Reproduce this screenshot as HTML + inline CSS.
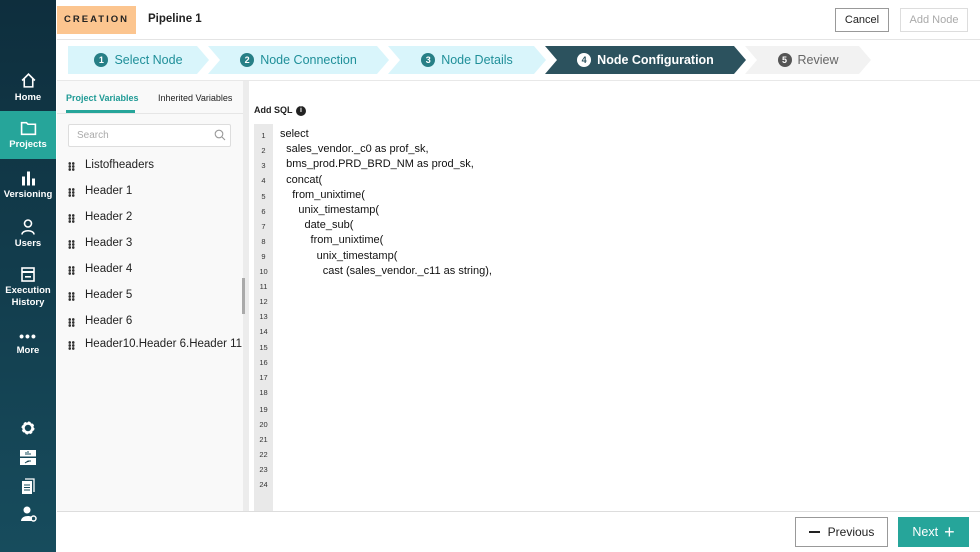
<!DOCTYPE html>
<html><head><style>
*{box-sizing:border-box;margin:0;padding:0}
body{width:980px;height:552px;overflow:hidden;font-family:"Liberation Sans",sans-serif;background:#fff;position:relative;color:#222}
.sb{position:absolute;left:0;top:0;width:56px;height:552px;background:linear-gradient(#0e2e3d,#174c5d)}
.ni{position:absolute;left:0;width:56px;text-align:center;color:#fff;font-size:9.5px;font-weight:bold;line-height:12px}
.ni svg{display:block;margin:0 auto 3px}
.abs{position:absolute}
.step{position:absolute;top:46px;height:28px;font-size:12.5px;display:flex;align-items:center;justify-content:center;clip-path:polygon(0 0,calc(100% - 12px) 0,100% 50%,calc(100% - 12px) 100%,0 100%,12px 50%)}
.num{display:inline-block;width:14px;height:14px;border-radius:50%;font-size:9px;font-weight:bold;text-align:center;line-height:14px;margin-right:6px}
.it{position:absolute;left:68px;font-size:11.5px;color:#222}
.it:before{content:"";position:absolute;left:0;top:3px;width:7px;height:9px;background:radial-gradient(circle,#333 1.2px,transparent 1.5px) 0 0/3.5px 3px}
.it span{margin-left:17px}
.ln{position:absolute;left:254px;width:19px;text-align:center;font-size:7.5px;color:#333}
.code{position:absolute;left:280px;top:127px;font-size:11px;line-height:15.2px;white-space:pre;color:#111}
.btn{position:absolute;font-size:11px;display:flex;align-items:center;justify-content:center}
</style></head><body>
<div class="sb"></div>
<div class="ni" style="top:72px"><svg width="17" height="17" viewBox="0 0 16 16"><path d="M2 8L8 2L14 8M4 6.5V14H12V6.5" fill="none" stroke="#fff" stroke-width="1.5"/></svg>Home</div>
<div class="abs" style="left:0;top:111px;width:56px;height:48px;background:#26a59a"></div>
<div class="ni" style="top:121px"><svg width="17" height="15" viewBox="0 0 16 14"><path d="M1.5 1.5H6L7.5 3H14.5V12.5H1.5Z" fill="none" stroke="#fff" stroke-width="1.5"/></svg>Projects</div>
<div class="ni" style="top:170px"><svg width="16" height="16" viewBox="0 0 16 15"><rect x="2" y="6" width="3" height="9" fill="#fff"/><rect x="7" y="1" width="3" height="14" fill="#fff"/><rect x="12" y="8" width="3" height="7" fill="#fff"/></svg>Versioning</div>
<div class="ni" style="top:218px"><svg width="16" height="17" viewBox="0 0 16 16"><circle cx="8" cy="5" r="3.5" fill="none" stroke="#fff" stroke-width="1.6"/><path d="M2 16C2 11 14 11 14 16" fill="none" stroke="#fff" stroke-width="1.6"/></svg>Users</div>
<div class="ni" style="top:267px"><svg width="14" height="15" viewBox="0 0 14 15"><rect x="1" y="1" width="12" height="13" fill="none" stroke="#fff" stroke-width="1.6"/><rect x="1" y="4" width="12" height="2" fill="#fff"/><rect x="4" y="9" width="6" height="1.6" fill="#fff"/></svg>Execution<br>History</div>
<div class="ni" style="top:332px"><div style="font-size:14px;line-height:8px;letter-spacing:1px;margin-bottom:5px">•••</div>More</div>
<svg class="abs" style="left:20px;top:420px" width="16" height="16" viewBox="0 0 16 16"><circle cx="8" cy="8" r="5" fill="none" stroke="#fff" stroke-width="3" stroke-dasharray="2.2 1.7"/><circle cx="8" cy="8" r="4.5" fill="none" stroke="#fff" stroke-width="2.5"/></svg>
<svg class="abs" style="left:20px;top:450px" width="16" height="15" viewBox="0 0 16 15"><rect x="0" y="0" width="16" height="6.5" fill="#fff"/><rect x="0" y="8" width="16" height="7" fill="#fff"/><path d="M6 5V2M8 5V1M10 5V3M5 13L8 11L11 11" stroke="#174c5d" stroke-width="1"/></svg>
<svg class="abs" style="left:21px;top:478px" width="14" height="17" viewBox="0 0 14 17"><path d="M4 1H13V14" fill="none" stroke="#fff" stroke-width="1.3"/><rect x="1" y="3" width="10" height="13" fill="#fff"/><path d="M3 7H9M3 9.5H9M3 12H9" stroke="#174c5d"/></svg>
<svg class="abs" style="left:21px;top:506px" width="16" height="16" viewBox="0 0 16 16"><circle cx="6" cy="4" r="3.5" fill="#fff"/><path d="M0 15C0 9 11 9 11 12V15Z" fill="#fff"/><circle cx="12.5" cy="12.5" r="2.5" fill="none" stroke="#fff" stroke-width="1.5"/></svg>

<div class="abs" style="left:57px;top:6px;width:79px;height:28px;background:#fcc58f;font-size:9.5px;font-weight:bold;letter-spacing:2px;line-height:28px;text-align:center;color:#222">CREATION</div>
<div class="abs" style="left:148px;top:13px;font-size:11.5px;font-weight:bold">Pipeline 1</div>
<div class="btn" style="left:835px;top:8px;width:54px;height:24px;border:1px solid #999;color:#222">Cancel</div>
<div class="btn" style="left:900px;top:8px;width:68px;height:24px;border:1px solid #ddd;color:#aaa">Add Node</div>
<div class="abs" style="left:57px;top:39px;width:923px;height:1px;background:#e4e4e4"></div>

<div class="step" style="left:68px;width:141px;background:#d9f5fb;color:#1f8f99;clip-path:polygon(0 0,calc(100% - 12px) 0,100% 50%,calc(100% - 12px) 100%,0 100%)"><span class="num" style="background:#277f86;color:#fff">1</span>Select Node</div>
<div class="step" style="left:208px;width:181px;background:#d9f5fb;color:#1f8f99"><span class="num" style="background:#277f86;color:#fff">2</span>Node Connection</div>
<div class="step" style="left:388px;width:158px;background:#d9f5fb;color:#1f8f99"><span class="num" style="background:#277f86;color:#fff">3</span>Node Details</div>
<div class="step" style="left:545px;width:201px;background:#2c525e;color:#fff;font-weight:bold"><span class="num" style="background:#fff;color:#2c525e">4</span>Node Configuration</div>
<div class="step" style="left:745px;width:126px;background:#f2f2f2;color:#666"><span class="num" style="background:#555;color:#fff">5</span>Review</div>
<div class="abs" style="left:57px;top:80px;width:923px;height:1px;background:#e8e8e8"></div>

<div class="abs" style="left:57px;top:81px;width:186px;height:430px;background:#f9f9f9"></div>
<div class="abs" style="left:243px;top:81px;width:6px;height:430px;background:#ececec"></div>
<div class="abs" style="left:242px;top:278px;width:3px;height:36px;background:#aaa"></div>
<div class="abs" style="left:66px;top:93px;font-size:9px;font-weight:bold;color:#1f9a95">Project Variables</div>
<div class="abs" style="left:66px;top:110px;width:69px;height:3px;background:#26a59a"></div>
<div class="abs" style="left:158px;top:93px;font-size:9px;color:#222">Inherited Variables</div>
<div class="abs" style="left:57px;top:113px;width:186px;height:1px;background:#e6e6e6"></div>
<div class="abs" style="left:68px;top:124px;width:163px;height:23px;border:1px solid #ddd;background:#fff;border-radius:2px;font-size:10px;color:#aaa;padding:5px 8px">Search</div>
<svg class="abs" style="left:214px;top:129px" width="12" height="12" viewBox="0 0 12 12"><circle cx="5" cy="5" r="3.8" fill="none" stroke="#999" stroke-width="1.1"/><path d="M8 8L11 11" stroke="#999" stroke-width="1.1"/></svg>
<div class="it" style="top:159px"><span>Listofheaders</span></div>
<div class="it" style="top:185px"><span>Header 1</span></div>
<div class="it" style="top:211px"><span>Header 2</span></div>
<div class="it" style="top:237px"><span>Header 3</span></div>
<div class="it" style="top:263px"><span>Header 4</span></div>
<div class="it" style="top:289px"><span>Header 5</span></div>
<div class="it" style="top:315px"><span>Header 6</span></div>
<div class="it" style="top:338px"><span>Header10.Header 6.Header 11</span></div>

<div class="abs" style="left:254px;top:105px;font-size:9px;font-weight:bold">Add SQL</div>
<div class="abs" style="left:296px;top:106px;width:10px;height:10px;border-radius:50%;background:#222;color:#fff;font-size:7px;font-weight:bold;text-align:center;line-height:10px">i</div>
<div class="abs" style="left:254px;top:124px;width:19px;height:387px;background:#e9e9e9"></div>
<div class="ln" style="top:131px">1</div><div class="ln" style="top:146px">2</div><div class="ln" style="top:161px">3</div><div class="ln" style="top:176px">4</div><div class="ln" style="top:192px">5</div><div class="ln" style="top:207px">6</div><div class="ln" style="top:222px">7</div><div class="ln" style="top:237px">8</div><div class="ln" style="top:252px">9</div><div class="ln" style="top:267px">10</div><div class="ln" style="top:282px">11</div><div class="ln" style="top:297px">12</div><div class="ln" style="top:312px">13</div><div class="ln" style="top:327px">14</div><div class="ln" style="top:343px">15</div><div class="ln" style="top:358px">16</div><div class="ln" style="top:373px">17</div><div class="ln" style="top:388px">18</div><div class="ln" style="top:405px">19</div><div class="ln" style="top:420px">20</div><div class="ln" style="top:435px">21</div><div class="ln" style="top:450px">22</div><div class="ln" style="top:465px">23</div><div class="ln" style="top:480px">24</div>
<div class="code">select
  sales_vendor._c0 as prof_sk,
  bms_prod.PRD_BRD_NM as prod_sk,
  concat(
    from_unixtime(
      unix_timestamp(
        date_sub(
          from_unixtime(
            unix_timestamp(
              cast (sales_vendor._c11 as string),</div>

<div class="abs" style="left:57px;top:511px;width:923px;height:1px;background:#ddd"></div>
<div class="btn" style="left:795px;top:517px;width:93px;height:30px;border:1px solid #999;font-size:12px;color:#222"><span style="display:inline-block;width:11px;height:2px;background:#222;margin-right:8px"></span>Previous</div>
<div class="btn" style="left:898px;top:517px;width:71px;height:30px;background:#26a59a;color:#fff;font-size:12.5px">Next <span style="font-size:18px;margin-left:6px;font-weight:300">+</span></div>
</body></html>
